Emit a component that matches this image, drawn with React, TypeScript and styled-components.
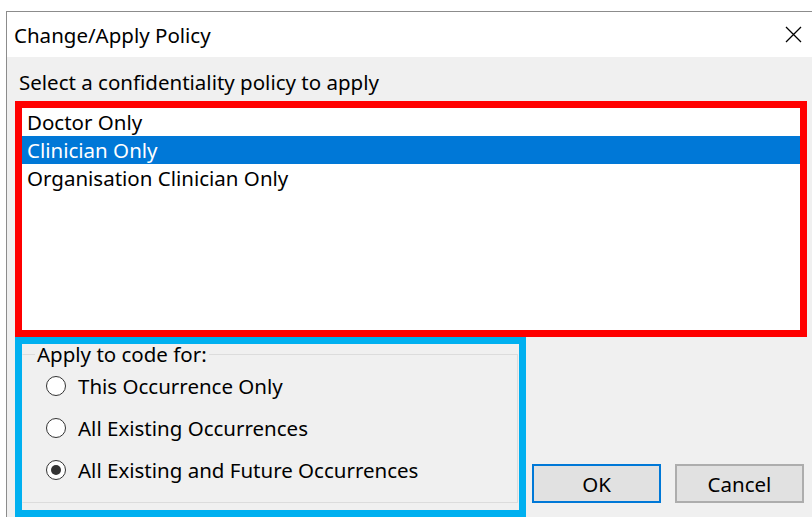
import { FC, useState } from 'react';
import styled, { createGlobalStyle } from 'styled-components';

const GlobalStyle = createGlobalStyle`
  html, body {
    margin: 0;
    padding: 0;
    background: #ffffff;
    overflow: hidden;
  }
  body {
    font-family: 'Noto Sans', 'Open Sans', sans-serif;
    color: #000000;
  }
`;

const Window = styled.div`
  margin: 11px 0 0 6px;
  width: 820px;
  height: 520px;
  border-top: 1px solid #8c8c8c;
  border-left: 1px solid #8c8c8c;
  background: #f0f0f0;
  display: flex;
  flex-direction: column;
`;

const TitleBar = styled.div`
  height: 45px;
  background: #ffffff;
  display: flex;
  align-items: center;
  justify-content: space-between;
  padding: 0 0 0 7px;
  width: 806px;
  box-sizing: border-box;
`;

const Title = styled.span`
  font-size: 20.5px;
  color: #000000;
`;

const CloseButton = styled.button`
  border: none;
  background: transparent;
  width: 46px;
  height: 45px;
  padding: 0;
  display: flex;
  align-items: center;
  justify-content: center;
  margin-right: -3px;
`;

const Body = styled.div`
  padding: 12px 0 0 8px;
  display: flex;
  flex-direction: column;
`;

const Prompt = styled.div`
  font-size: 20.5px;
  line-height: 26px;
  padding-left: 4px;
  margin-bottom: 6px;
`;

const ListBox = styled.ul`
  list-style: none;
  margin: 0;
  padding: 0;
  width: 792px;
  height: 236px;
  box-sizing: border-box;
  border: 7px solid #ff0000;
  background: #ffffff;
`;

const ListItem = styled.li<{ $selected?: boolean }>`
  height: 28px;
  line-height: 28px;
  padding-left: 5px;
  font-size: 20.5px;
  background: ${({ $selected }) => ($selected ? '#0078d7' : 'transparent')};
  color: ${({ $selected }) => ($selected ? '#ffffff' : '#000000')};
  cursor: default;
`;

const BottomRow = styled.div`
  display: flex;
`;

const GroupFrame = styled.div`
  width: 511px;
  height: 180px;
  box-sizing: border-box;
  border: 7px solid #00b0f0;
  padding: 0 1px 0 0;
`;

const GroupBox = styled.fieldset`
  margin: 0;
  padding: 0;
  height: 159px;
  box-sizing: border-box;
  border: 1px solid #dcdcdc;
  border-left-color: transparent;
  min-width: 0;
`;

const Legend = styled.legend`
  font-size: 20.5px;
  line-height: 20px;
  padding: 0 2px;
  margin-left: 12px;
`;

const RadioList = styled.div`
  display: flex;
  flex-direction: column;
  gap: 18px;
  padding: 10px 0 0 23px;
`;

const RadioRow = styled.label`
  display: flex;
  align-items: center;
  gap: 12px;
  height: 24px;
  font-size: 20.5px;
  cursor: default;
`;

const RadioCircle = styled.span<{ $checked?: boolean }>`
  width: 20px;
  height: 20px;
  box-sizing: border-box;
  border-radius: 50%;
  border: 1.5px solid #333333;
  background: #ffffff;
  display: flex;
  align-items: center;
  justify-content: center;

  &::after {
    content: '';
    width: 10px;
    height: 10px;
    border-radius: 50%;
    background: #333333;
    display: ${({ $checked }) => ($checked ? 'block' : 'none')};
  }
`;

const ButtonBar = styled.div`
  display: flex;
  gap: 14px;
  padding: 127px 0 0 6px;
`;

const DialogButton = styled.button<{ $default?: boolean }>`
  width: 129px;
  height: 39px;
  box-sizing: border-box;
  background: #e1e1e1;
  border: ${({ $default }) => ($default ? '2px solid #0078d7' : '2px solid #adadad')};
  font-family: inherit;
  font-size: 20.5px;
  color: #000000;
  padding: 0;
`;

const CloseIcon: FC = () => (
  <svg width="17" height="17" viewBox="0 0 17 17">
    <path d="M1 1 L16 16 M16 1 L1 16" stroke="#000" strokeWidth="1.3" fill="none" />
  </svg>
);

const policies = ['Doctor Only', 'Clinician Only', 'Organisation Clinician Only'];
const scopes = ['This Occurrence Only', 'All Existing Occurrences', 'All Existing and Future Occurrences'];

const App: FC = () => {
  const [policy, setPolicy] = useState(1);
  const [scope, setScope] = useState(2);

  return (
    <>
      <GlobalStyle />
      <Window>
        <TitleBar>
          <Title>Change/Apply Policy</Title>
          <CloseButton aria-label="Close">
            <CloseIcon />
          </CloseButton>
        </TitleBar>
        <Body>
          <Prompt>Select a confidentiality policy to apply</Prompt>
          <ListBox>
            {policies.map((name, i) => (
              <ListItem key={name} $selected={i === policy} onClick={() => setPolicy(i)}>
                {name}
              </ListItem>
            ))}
          </ListBox>
          <BottomRow>
            <GroupFrame>
              <GroupBox>
                <Legend>Apply to code for:</Legend>
                <RadioList>
                  {scopes.map((label, i) => (
                    <RadioRow key={label} onClick={() => setScope(i)}>
                      <RadioCircle $checked={i === scope} />
                      {label}
                    </RadioRow>
                  ))}
                </RadioList>
              </GroupBox>
            </GroupFrame>
            <ButtonBar>
              <DialogButton $default>OK</DialogButton>
              <DialogButton>Cancel</DialogButton>
            </ButtonBar>
          </BottomRow>
        </Body>
      </Window>
    </>
  );
};

export default App;
